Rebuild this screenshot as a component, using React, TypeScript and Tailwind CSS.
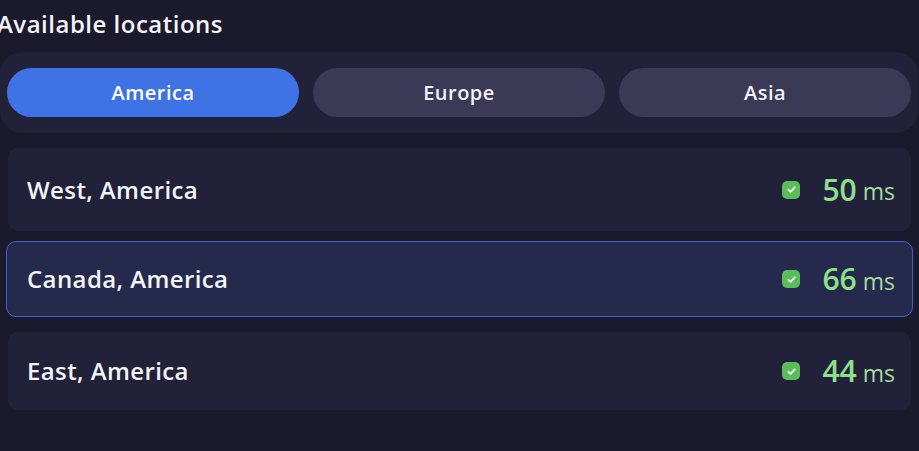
import React, { useState } from 'react';

const regions = ['America', 'Europe', 'Asia'];

const locations = [
  { name: 'West, America', ping: 50 },
  { name: 'Canada, America', ping: 66 },
  { name: 'East, America', ping: 44 },
];

const CheckBadge = () => (
  <span className="flex h-[18px] w-[18px] items-center justify-center rounded-[5px] bg-[#5bbd5a]">
    <svg width="11" height="11" viewBox="0 0 12 12" fill="none">
      <path d="M2.5 6.3 L5 8.6 L9.5 3.6" stroke="#f2fff0" strokeWidth="1.9" strokeLinecap="round" strokeLinejoin="round" />
    </svg>
  </span>
);

const App = () => {
  const [region, setRegion] = useState('America');
  const [selected, setSelected] = useState(1);

  return (
    <div
      className="h-[451px] w-[919px] overflow-hidden bg-[#1b1a2c] text-white"
      style={{ fontFamily: '"Open Sans", "Noto Sans", sans-serif' }}
    >
      <h2 className="-ml-[3px] pt-[8px] text-[24px] font-semibold leading-[32px] tracking-[0.5px] text-[#f4f4f8]">
        Available locations
      </h2>

      <div className="mt-[12px] flex w-[918px] gap-[14px] rounded-[22px] bg-[#22213a] px-[7px] py-[16px]">
        {regions.map((r) => (
          <button
            key={r}
            onClick={() => setRegion(r)}
            className={`h-[49px] flex-1 rounded-full text-[20px] font-semibold tracking-[0.5px] ${
              r === region ? 'bg-[#3f72e4] text-white' : 'bg-[#3a3956] text-[#f2f2f6]'
            }`}
          >
            {r}
          </button>
        ))}
      </div>

      <div className="mt-[15px] flex flex-col">
        {locations.map((loc, i) => {
          const active = i === selected;
          const cls = active
            ? 'mx-[6px] mt-[10px] h-[76px] border-[1.5px] border-[#3e62c6] bg-[#252a4c] pl-[20px] pr-[17px]'
            : i === 0
            ? 'mx-[8px] h-[83px] bg-[#21223a] pl-[19px] pr-[16px]'
            : 'mx-[8px] mt-[15px] h-[78px] bg-[#21223a] pl-[19px] pr-[16px]';
          return (
            <div
              key={loc.name}
              onClick={() => setSelected(i)}
              className={`flex cursor-pointer items-center justify-between rounded-[10px] ${cls}`}
            >
              <span className="text-[24px] font-semibold tracking-[0.4px] text-[#f4f4f8]">{loc.name}</span>
              <span className="flex items-center">
                <CheckBadge />
                <span className="ml-[22px] text-[30px] font-semibold leading-none text-[#8fe08a]">{loc.ping}</span>
                <span className="ml-[6px] mt-[4px] text-[23px] font-medium leading-none text-[#a6dd9f]">ms</span>
              </span>
            </div>
          );
        })}
      </div>
    </div>
  );
};

export default App;
